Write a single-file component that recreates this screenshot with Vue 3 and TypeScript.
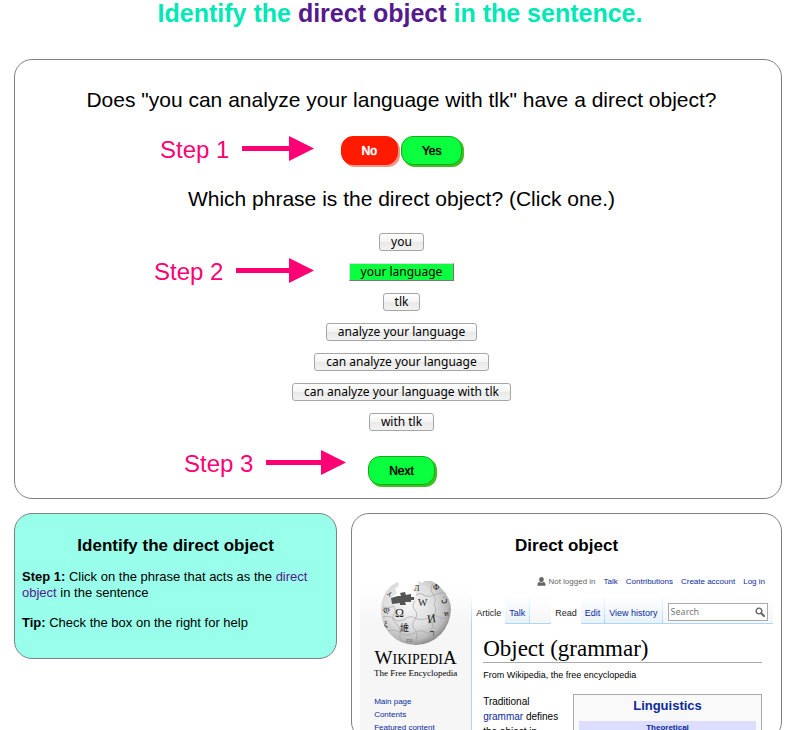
<script setup lang="ts">
import { ref } from 'vue'

const phrases: string[] = [
  'you',
  'your language',
  'tlk',
  'analyze your language',
  'can analyze your language',
  'can analyze your language with tlk',
  'with tlk',
]
const selected = ref('your language')
const query = ref('')
const hasObject = ref(true)

const steps = [
  { name: 'Step 1', cls: 'step-one', shaft: 48 },
  { name: 'Step 2', cls: 'step-two', shaft: 54 },
  { name: 'Step 3', cls: 'step-three', shaft: 56 },
]
</script>

<template>
  <div class="page">
    <h1 class="title">Identify the <a href="#direct-object">direct object</a> in the sentence.</h1>

    <main class="panel task">
      <p class="question">Does "you can analyze your language with tlk" have a direct object?</p>
      <div class="answers">
        <button type="button" class="pill no" :aria-pressed="!hasObject" @click="hasObject = false">No</button>
        <button type="button" class="pill" :aria-pressed="hasObject" @click="hasObject = true">Yes</button>
      </div>
      <p class="question">Which phrase is the direct object? (Click one.)</p>
      <ul class="phrases">
        <li v-for="p in phrases" :key="p">
          <button type="button" class="phrase" :class="{ chosen: p === selected }" @click="selected = p">{{ p }}</button>
        </li>
      </ul>
      <button type="button" class="pill next">Next</button>

      <div v-for="s in steps" :key="s.name" class="step" :class="s.cls">
        <span>{{ s.name }}</span>
        <svg :width="s.shaft + 25" height="26" aria-hidden="true">
          <rect x="0" y="9" :width="s.shaft" height="5" fill="#ff0074" />
          <polygon :points="`${s.shaft - 1},-1 ${s.shaft + 24},11.5 ${s.shaft - 1},24`" fill="#ff0074" />
        </svg>
      </div>
    </main>

    <div class="columns">
      <section class="panel help">
        <h2>Identify the direct object</h2>
        <p><b>Step 1:</b> Click on the phrase that acts as the <a href="#direct-object">direct object</a> in the sentence</p>
        <p><b>Tip:</b> Check the box on the right for help</p>
      </section>

      <section id="direct-object" class="panel reference">
        <h2>Direct object</h2>
        <div class="wiki">
          <aside class="side">
            <svg class="globe" width="72" height="66" viewBox="0 0 72 66" aria-hidden="true">
              <defs>
                <radialGradient id="ball" cx="0.4" cy="0.38" r="0.65">
                  <stop offset="0" stop-color="#f6f6f6" />
                  <stop offset="0.55" stop-color="#dedede" />
                  <stop offset="0.85" stop-color="#b8b8b8" />
                  <stop offset="1" stop-color="#858585" />
                </radialGradient>
              </defs>
              <path d="M18 2 L19 6 L15 9 L17 13 L12 17 L14 20 L30 20 L36 16 L36 12 L32 9 L39 7 L38 1 L42 3 L45 1 L51 1 Q57 3 61 8 Q71 18 71 30 Q70 44 61 54 Q50 65 36 65 Q20 65 10 54 Q1 44 1 30 Q1 16 10 7 Q13 4 18 2Z" fill="url(#ball)" />
              <path d="M11 18 L18 16 L21 16 L20 13 L25 12 L26 15 L31 14 L31 17 L34 17 L34 20 L31 20 L31 22 L25 22 L26 25 L20 25 L20 23 L12 24Z" fill="#555" />
              <g fill="none" stroke="#a4a4a4" stroke-width="0.7">
                <path d="M3 27 Q9 29 14 26 M3 37 Q10 35 14 39 T25 39 Q30 35 35 38 T48 38 Q54 34 59 37 T70 35" />
                <path d="M8 51 Q16 49 21 53 T34 53 Q39 49 45 52 T61 50 M36 15 Q40 12 44 15 T57 14 Q62 11 66 14" />
                <path d="M13 26 Q17 30 14 34 T16 44 Q21 47 20 54 T24 62 M35 21 Q31 26 35 30 T34 41 Q31 46 35 50 T35 64" />
                <path d="M53 4 Q49 9 53 14 T54 25 Q58 31 54 34 T53 47 Q49 51 49 61" />
              </g>
              <g class="glyphs">
                <text x="15" y="37" font-size="12">Ω</text>
                <text x="38" y="26" font-size="10">W</text>
                <text x="47" y="43" font-size="12" transform="rotate(-8 50 38)">И</text>
                <text x="20" y="51" font-size="9">維</text>
                <text x="34" y="11" font-size="8">Л</text>
                <text x="50" y="56" font-size="9">ר</text>
                <text x="3" y="32" font-size="8">დ</text>
                <text x="53" y="10" font-size="8">Ф</text>
                <text x="61" y="22" font-size="9">ن</text>
                <text x="6" y="16" font-size="7">ィ</text>
                <text x="4" y="47" font-size="8">ξ</text>
                <text x="26" y="62" font-size="7">လ</text>
                <text x="64" y="36" font-size="7">ท</text>
              </g>
            </svg>
            <div class="wordmark">W<small>IKIPEDI</small>A</div>
            <div class="tagline">The Free Encyclopedia</div>
            <nav class="side-nav">
              <a href="#main">Main page</a>
              <a href="#contents">Contents</a>
              <a href="#featured">Featured content</a>
            </nav>
          </aside>

          <div class="body">
            <nav class="personal">
              <svg width="9" height="9" viewBox="0 0 9 9" fill="#666" aria-hidden="true">
                <ellipse cx="4.5" cy="2.6" rx="2.3" ry="2.6" />
                <path d="M0.5 8.7 V7 Q0.8 5.2 2.6 5 Q4.5 6.4 6.4 5 Q8.2 5.2 8.5 7 V8.7Z" />
              </svg>
              <span>Not logged in</span>
              <a href="#talk">Talk</a>
              <a href="#contributions">Contributions</a>
              <a href="#create">Create account</a>
              <a href="#login">Log in</a>
            </nav>
            <div class="tabs">
              <a class="tab current" href="#article">Article</a>
              <a class="tab" href="#discussion">Talk</a>
              <span class="tab spacer"></span>
              <a class="tab current" href="#read">Read</a>
              <a class="tab" href="#edit">Edit</a>
              <a class="tab" href="#history">View history</a>
              <form class="search" @submit.prevent>
                <div class="search-box">
                  <input v-model="query" type="text" placeholder="Search" aria-label="Search" />
                  <svg width="10" height="10" viewBox="0 0 10 10" aria-hidden="true">
                    <circle cx="4" cy="4" r="2.9" fill="none" stroke="#666" stroke-width="1.4" />
                    <path d="M6.2 6.2 L9 9" stroke="#666" stroke-width="2" stroke-linecap="round" />
                  </svg>
                </div>
              </form>
            </div>
            <article class="article">
              <h3>Object (grammar)</h3>
              <p class="from">From Wikipedia, the free encyclopedia</p>
              <div class="text-row">
                <p class="lead">Traditional <a href="#grammar">grammar</a> defines the object in</p>
                <div class="infobox">
                  <a class="box-title" href="#linguistics">Linguistics</a>
                  <a class="box-band" href="#theoretical">Theoretical</a>
                </div>
              </div>
            </article>
          </div>
        </div>
      </section>
    </div>
  </div>
</template>

<style>
body {
  background: #fff;
}
</style>

<style scoped>
* {
  box-sizing: border-box;
}
.page {
  height: 100vh;
  overflow: hidden;
  padding: 0 17px 0 14px;
  font-family: "Liberation Sans", Arial, sans-serif;
  color: #000;
}
h1, h2, h3, p, ul {
  margin: 0;
  padding: 0;
}
a {
  color: #551a8b;
  text-decoration: none;
}
.title {
  padding-left: 4px;
  font-size: 25px;
  line-height: 26px;
  text-align: center;
  color: #00e8b5;
}
.panel {
  border: 1px solid #808080;
  border-radius: 18px;
}
.task {
  position: relative;
  display: flex;
  flex-direction: column;
  align-items: center;
  margin-top: 33px;
  padding: 28px 8px 13px 15px;
}
.question {
  font-size: 21px;
  line-height: 24px;
}
.answers {
  display: flex;
  gap: 3px;
  margin: 24px 0 22px;
}
.pill {
  height: 29px;
  padding: 0 20px;
  border: 1px solid #18a818;
  border-radius: 12px;
  background: #0aff3f;
  box-shadow: 2px 2px 0 #3fc01c;
  color: #000;
  font: 12px/14px "Liberation Sans", Arial, sans-serif;
  text-shadow: 0 0 1px currentColor;
}
.pill.no {
  border-color: #ff1a00;
  background: #ff1a00;
  box-shadow: 2px 2px 0 #f29488;
  color: #fff;
  text-shadow: 0 0 1px #fff, 0 0 1px #fff;
}
.phrases {
  display: flex;
  flex-direction: column;
  align-items: center;
  gap: 12px;
  margin-top: 22px;
  list-style: none;
}
.phrases li {
  display: flex;
}
.phrase {
  height: 18px;
  padding: 0 11px;
  border: 1px solid #a6a6a6;
  border-radius: 3px;
  background: linear-gradient(#fff, #f4f4f4 50%, #e9e9e9 50%, #f2f2f2);
  color: #000;
  font: 12px/14px "Noto Sans", sans-serif;
}
.phrase.chosen {
  border-color: #ddd #777 #777 #ddd;
  border-radius: 0;
  background: #0aff3f;
}
.next {
  margin-top: 25px;
}
.step {
  position: absolute;
  display: flex;
  align-items: center;
  gap: 13px;
  color: #ff0074;
  font-size: 24px;
  line-height: 28px;
}
.step svg {
  overflow: visible;
}
.step-one {
  top: 76px;
  left: 145px;
}
.step-two {
  top: 198px;
  left: 139px;
}
.step-three {
  top: 390px;
  left: 169px;
}
.columns {
  display: grid;
  grid-template-columns: 3fr 4fr;
  align-items: start;
  gap: 14px;
  margin-top: 14px;
}
h2 {
  font-size: 17px;
  line-height: 20px;
  text-align: center;
}
.help {
  padding: 22px 7px 27px;
  background: #99ffea;
}
.help p {
  margin-top: 14px;
  font-size: 13px;
  line-height: 16px;
}
.help h2 + p {
  margin-top: 13px;
}
.reference {
  overflow: hidden;
  padding: 22px 8px 0;
}
.wiki {
  display: flex;
  margin-top: 8px;
}
.wiki a {
  color: #0b2a9c;
}
.side {
  flex: 0 0 111px;
  padding-top: 16px;
  background: linear-gradient(#fff 20px, #f6f6f6 60px);
}
.globe {
  display: block;
  margin-left: 20px;
}
.glyphs {
  fill: #222;
  font-family: "Liberation Serif", "DejaVu Serif", "Noto Sans CJK SC", serif;
}
.wordmark {
  margin-top: 4px;
  font: 19px/16px "Liberation Serif", serif;
  text-align: center;
}
.wordmark small {
  font-size: 14px;
}
.tagline {
  font: 9px/10px "Liberation Serif", serif;
  text-align: center;
}
.side-nav {
  display: flex;
  flex-direction: column;
  margin: 17px 0 0 14px;
  font-size: 8px;
  line-height: 13px;
}
.body {
  flex: 1;
  min-width: 0;
}
.personal {
  display: flex;
  align-items: center;
  justify-content: flex-end;
  gap: 8px;
  height: 32px;
  padding: 3px 8px 0 0;
  font-size: 8px;
  line-height: 10px;
}
.personal span {
  margin-left: -6px;
  color: #666;
}
.tabs {
  display: flex;
  height: 28px;
  border-left: 1px solid;
  border-image: linear-gradient(#fff, #a7d7f9) 1;
  font-size: 9px;
}
.tab {
  padding: 12px 4px 0;
  border-bottom: 1px solid #a7d7f9;
  border-right: 1px solid;
  border-image: linear-gradient(#fff, #a7d7f9) 1;
  background: linear-gradient(#fff, #e8f2f8);
  line-height: 10px;
  white-space: nowrap;
}
.wiki .tab.current {
  border: 0;
  background: #fff;
  color: #222;
}
.spacer {
  width: 21px;
  border-right: 0;
  background: linear-gradient(#fff, #f6f6f6);
}
.search {
  flex: 1;
  min-width: 0;
  padding: 7px 5px 0;
  border-bottom: 1px solid #a7d7f9;
  background: linear-gradient(#fff, #f6f6f6);
}
.search-box {
  display: flex;
  align-items: center;
  height: 18px;
  padding: 0 2px;
  border: 1px solid #aaa;
  background: #fff;
}
.search input {
  flex: 1;
  min-width: 0;
  padding: 0;
  border: 0;
  outline: 0;
  background: none;
  font: 9px/12px "Noto Sans", sans-serif;
}
.search input::placeholder {
  color: #777;
}
.article {
  padding: 11px 11px 0;
  border-left: 1px solid #a7d7f9;
}
h3 {
  border-bottom: 1px solid #aaa;
  font: 23px/27px "Liberation Serif", serif;
}
.from {
  margin-top: 6px;
  font-size: 9px;
  line-height: 12px;
}
.text-row {
  display: flex;
  align-items: flex-start;
  gap: 12px;
  margin-top: 13px;
}
.lead {
  flex: 1;
  font-size: 10px;
  line-height: 15px;
}
.infobox {
  display: flex;
  flex-direction: column;
  flex: 0 0 189px;
  gap: 7px;
  padding: 3px 5px;
  border: 1px solid #aaa;
  background: #f9f9f9;
  font-weight: bold;
  text-align: center;
}
.box-title {
  font-size: 13px;
  line-height: 16px;
}
.box-band {
  background: #ddf;
  font-size: 8px;
  line-height: 13px;
}
</style>
